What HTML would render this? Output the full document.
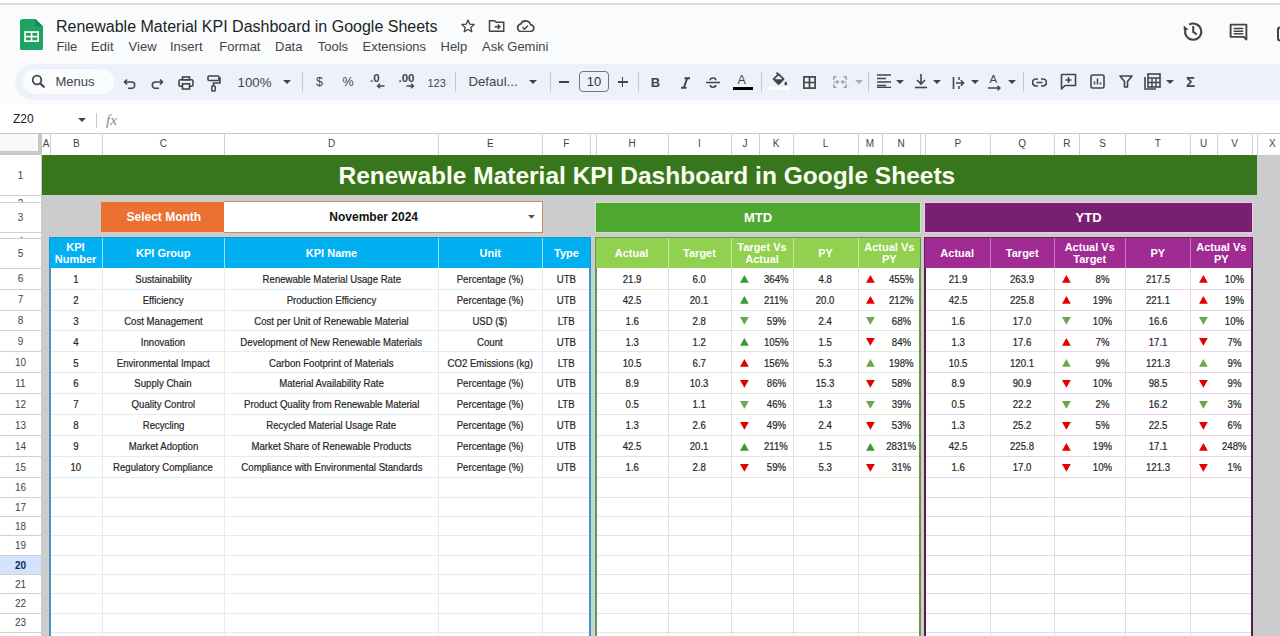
<!DOCTYPE html>
<html><head><meta charset="utf-8"><style>
*{margin:0;padding:0}
body{width:1280px;height:636px;overflow:hidden;position:relative;background:#f9fbfd;font-family:"Liberation Sans",sans-serif}
div,svg{position:absolute}
.t{white-space:nowrap}
.hd{display:flex;align-items:center;justify-content:center;text-align:center;color:#fff;font-weight:bold;font-size:11px;line-height:12px}
.dt{text-align:center;font-size:10.4px;color:#262626;-webkit-text-stroke:0.2px #262626}
.dt span{display:inline-block;transform:scaleX(.925);position:relative;top:1.6px}
.ch{height:22px;line-height:22px;text-align:center;font-size:10px;color:#444}
.rh{height:16px;line-height:16px;text-align:center;font-size:10px;color:#444}
.mi{font-size:13px;color:#444;top:38.6px;line-height:16px}
</style></head><body>
<div style="left:0;top:0;width:1280px;height:3px;background:#fff"></div>
<div style="left:0;top:2.8px;width:1280px;height:2px;background:#dadada"></div>
<svg style="left:19.8px;top:18.9px" width="23" height="31.5" viewBox="0 0 23 31.5">
<path d="M2.5 0 H15.5 L23 7.5 V29 Q23 31.5 20.5 31.5 H2.5 Q0 31.5 0 29 V2.5 Q0 0 2.5 0Z" fill="#1ea362"/>
<path d="M15.5 0 L23 7.5 H17.5 Q15.5 7.5 15.5 5.5Z" fill="#178a4f"/>
<rect x="4.2" y="12.2" width="14.8" height="10.8" fill="#fff"/>
<rect x="5.9" y="13.9" width="4.9" height="2.9" fill="#1ea362"/><rect x="12.4" y="13.9" width="4.9" height="2.9" fill="#1ea362"/>
<rect x="5.9" y="18.4" width="4.9" height="2.9" fill="#1ea362"/><rect x="12.4" y="18.4" width="4.9" height="2.9" fill="#1ea362"/>
</svg>
<div class="t" style="left:56px;top:17.5px;font-size:16px;line-height:18px;color:#1f1f1f">Renewable Material KPI Dashboard in Google Sheets</div>
<div class="t mi" style="left:56.4px">File</div>
<div class="t mi" style="left:91.1px">Edit</div>
<div class="t mi" style="left:128.6px">View</div>
<div class="t mi" style="left:170px">Insert</div>
<div class="t mi" style="left:219.3px">Format</div>
<div class="t mi" style="left:275px">Data</div>
<div class="t mi" style="left:317.7px">Tools</div>
<div class="t mi" style="left:362.5px">Extensions</div>
<div class="t mi" style="left:440.5px">Help</div>
<div class="t mi" style="left:482px">Ask Gemini</div>
<svg style="left:460px;top:18px" width="16" height="16" viewBox="0 0 24 24"><path d="M12 3l2.6 6.1 6.6.6-5 4.4 1.5 6.5L12 17.2 6.3 20.6l1.5-6.5-5-4.4 6.6-.6z" fill="none" stroke="#444" stroke-width="2" stroke-linejoin="round"/></svg>
<svg style="left:488px;top:18px" width="18" height="16" viewBox="0 0 24 20"><path d="M2 3h7l2 2h10v12H2z" fill="none" stroke="#444" stroke-width="2" stroke-linejoin="round"/><path d="M9 11h7M13 8l3 3-3 3" fill="none" stroke="#444" stroke-width="1.8"/></svg>
<svg style="left:516.3px;top:20px" width="18.4" height="12.3" viewBox="0 0 24 16"><path d="M6 15h12.5a4.5 4.5 0 0 0 .5-9A6.8 6.8 0 0 0 6.2 5.2 5 5 0 0 0 6 15z" fill="none" stroke="#444" stroke-width="2.2"/><path d="M8.5 9.5l2.5 2.5 4.5-4.5" fill="none" stroke="#444" stroke-width="2"/></svg>
<svg style="left:1180px;top:19px" width="28" height="26" viewBox="0 0 28 26"><path d="M9.15 5.74A8.1 8.1 0 1 1 5.38 10.65" fill="none" stroke="#444" stroke-width="2"/><polygon points="3.6,6.6 3.9,11.6 8.6,10.6" fill="#444"/><path d="M13.2 7V12.9L16.9 15.5" fill="none" stroke="#444" stroke-width="2"/></svg>
<svg style="left:1228px;top:22px" width="21" height="21" viewBox="0 0 24 24"><path d="M3 3h18v17l-3-3H3z" fill="none" stroke="#444" stroke-width="2.2" stroke-linejoin="round"/><path d="M6.5 7.5h11M6.5 10.5h11M6.5 13.5h11" stroke="#444" stroke-width="1.8"/></svg>
<svg style="left:1276.5px;top:26px" width="10" height="16" viewBox="0 0 10 16"><rect x="1" y="1.5" width="12" height="13" rx="2" fill="none" stroke="#444" stroke-width="2"/></svg>
<div style="left:15px;top:63.8px;width:1300px;height:36px;border-radius:18px;background:#edf2fa"></div>
<div style="left:22.5px;top:69.3px;width:91.3px;height:25px;border-radius:12.5px;background:#fbfcfe"></div>
<svg style="left:31px;top:74px" width="15" height="15" viewBox="0 0 15 15"><circle cx="6" cy="6" r="4.3" fill="none" stroke="#444" stroke-width="1.8"/><path d="M9.2 9.2l4.3 4.3" stroke="#444" stroke-width="2"/></svg>
<div class="t" style="left:55.5px;top:74px;font-size:13px;line-height:16px;color:#444">Menus</div>
<svg style="left:122.5px;top:75.5px" width="14" height="13" viewBox="0 0 14 13"><path d="M4 3.5L1.5 6 4 8.5" fill="none" stroke="#444" stroke-width="1.6"/><path d="M2 6h6.5a3.2 3.2 0 0 1 0 6.4H5" fill="none" stroke="#444" stroke-width="1.6"/></svg>
<svg style="left:149.7px;top:75.5px" width="14" height="13" viewBox="0 0 14 13"><path d="M10 3.5L12.5 6 10 8.5" fill="none" stroke="#444" stroke-width="1.6"/><path d="M12 6H5.5a3.2 3.2 0 0 0 0 6.4H9" fill="none" stroke="#444" stroke-width="1.6"/></svg>
<svg style="left:178px;top:75.5px" width="16" height="14" viewBox="0 0 16 14"><rect x="4.5" y="1" width="7" height="2.8" fill="none" stroke="#444" stroke-width="1.6"/><rect x="1" y="3.8" width="14" height="6.5" rx="1.5" fill="none" stroke="#444" stroke-width="1.6"/><rect x="4.5" y="7.8" width="7" height="5.2" fill="#edf2fa" stroke="#444" stroke-width="1.6"/></svg>
<svg style="left:207px;top:74.5px" width="14" height="17" viewBox="0 0 14 17"><rect x="1" y="1" width="11" height="4.5" rx="1" fill="none" stroke="#444" stroke-width="1.6"/><path d="M12 3h1v5H6.5v3" fill="none" stroke="#444" stroke-width="1.6"/><rect x="4.8" y="11" width="3.4" height="5" rx="0.8" fill="none" stroke="#444" stroke-width="1.5"/></svg>
<div class="t" style="left:237.5px;top:75px;font-size:13.3px;line-height:16px;color:#444">100%</div>
<svg style="left:282.5px;top:79.5px" width="8" height="4"><polygon points="0,0 8,0 4,4" fill="#444"/></svg>
<div style="left:302px;top:72px;width:1px;height:20px;background:#c7c7c7"></div>
<div class="t" style="left:316px;top:74px;font-size:12.5px;line-height:16px;color:#444">$</div>
<div class="t" style="left:342.5px;top:74px;font-size:12.5px;line-height:16px;color:#444">%</div>
<div class="t" style="left:370px;top:71px;font-size:11.5px;line-height:14px;color:#444;font-weight:bold">.0</div>
<svg style="left:376px;top:83px" width="9" height="6" viewBox="0 0 9 6"><path d="M8.5 3H1.5M4 .8L1.5 3 4 5.2" fill="none" stroke="#444" stroke-width="1.3"/></svg>
<div class="t" style="left:398.5px;top:71px;font-size:11.5px;line-height:14px;color:#444;font-weight:bold">.00</div>
<svg style="left:406px;top:83px" width="9" height="6" viewBox="0 0 9 6"><path d="M.5 3H7.5M5 .8L7.5 3 5 5.2" fill="none" stroke="#444" stroke-width="1.3"/></svg>
<div class="t" style="left:427.5px;top:75.5px;font-size:11px;line-height:14px;color:#444">123</div>
<div style="left:454.5px;top:72px;width:1px;height:20px;background:#c7c7c7"></div>
<div class="t" style="left:468.5px;top:74px;font-size:13.2px;line-height:16px;color:#444">Defaul...</div>
<svg style="left:528.5px;top:79.5px" width="8" height="4"><polygon points="0,0 8,0 4,4" fill="#444"/></svg>
<div style="left:550px;top:72px;width:1px;height:20px;background:#c7c7c7"></div>
<div style="left:558.5px;top:81.3px;width:10px;height:1.6px;background:#444"></div>
<div style="left:578.7px;top:71.2px;width:30.8px;height:21.3px;border:1px solid #747775;border-radius:4px;box-sizing:border-box"></div>
<div class="t" style="left:578.7px;top:74px;width:30.8px;text-align:center;font-size:13px;line-height:16px;color:#333">10</div>
<div style="left:617.5px;top:81.3px;width:10px;height:1.6px;background:#444"></div><div style="left:621.7px;top:77px;width:1.6px;height:10px;background:#444"></div>
<div style="left:638px;top:72px;width:1px;height:20px;background:#c7c7c7"></div>
<div class="t" style="left:650.8px;top:74.8px;font-size:13px;line-height:16px;color:#444;font-weight:bold">B</div>
<svg style="left:679.5px;top:76.5px" width="11" height="12" viewBox="0 0 11 12"><path d="M4.5 1.2h5.5M1 10.8h5.5M7.3 1.2L3.7 10.8" fill="none" stroke="#444" stroke-width="1.9"/></svg>
<svg style="left:706px;top:76.5px" width="14" height="11" viewBox="0 0 14 11"><path d="M0 5.5h14" stroke="#444" stroke-width="1.5"/><path d="M9.8 3.2a2.8 2.2 0 0 0-5.6 0M4.2 8a2.8 2.2 0 0 0 5.6 0" fill="none" stroke="#444" stroke-width="1.6"/></svg>
<div class="t" style="left:737.5px;top:73.3px;font-size:12.5px;line-height:14px;color:#444">A</div>
<div style="left:732.5px;top:87px;width:20.5px;height:3px;background:#000"></div>
<div style="left:761px;top:72px;width:1px;height:20px;background:#c7c7c7"></div>
<svg style="left:771.5px;top:72px" width="16" height="14" viewBox="0 0 16 14"><path d="M5 .8l1.6 1.6M3.2 3.8l6.2 0 0 0-3.6 6.2z" fill="none" stroke="#444" stroke-width="0"/><path d="M6.6 2.2l5 5-5 5-5-5z" fill="none" stroke="#444" stroke-width="1.7" stroke-linejoin="round"/><path d="M1.6 7.2h10l-5 5z" fill="#444"/><path d="M4.5 .6l2.3 2.3" stroke="#444" stroke-width="1.6"/><path d="M13.8 9.3c.9 1.3 1.4 2 1.4 2.6a1.4 1.4 0 0 1-2.8 0c0-.6.5-1.3 1.4-2.6z" fill="#444"/></svg>
<div style="left:768.5px;top:87px;width:21.5px;height:2.8px;background:#fff"></div>
<svg style="left:803.3px;top:75.7px" width="13" height="13" viewBox="0 0 13 13"><rect x=".9" y=".9" width="11.2" height="11.2" fill="none" stroke="#444" stroke-width="1.7"/><path d="M6.5 1v11M1 6.5h11" stroke="#444" stroke-width="1.7"/></svg>
<svg style="left:833px;top:76px" width="14" height="12" viewBox="0 0 14 12"><path d="M3.5 .8H.8V4M.8 8v3.2h2.7M.8 6h4.7M3.8 4.2L5.5 6 3.8 7.8M10.5 .8h2.7V4M13.2 8v3.2h-2.7M13.2 6H8.5M10.2 4.2L8.5 6l1.7 1.8" fill="none" stroke="#a8a8a8" stroke-width="1.5"/></svg>
<svg style="left:855px;top:79.5px" width="8" height="4"><polygon points="0,0 8,0 4,4" fill="#aaa"/></svg>
<div style="left:868px;top:72px;width:1px;height:20px;background:#c7c7c7"></div>
<svg style="left:877px;top:74px" width="14" height="14" viewBox="0 0 14 14"><path d="M0 1h14M0 4.5h9M0 8h14M0 11.5h9M0 13.5h14" stroke="#444" stroke-width="1.4"/></svg>
<svg style="left:895.5px;top:79.5px" width="8" height="4"><polygon points="0,0 8,0 4,4" fill="#444"/></svg>
<svg style="left:914px;top:73px" width="14" height="16" viewBox="0 0 14 16"><path d="M7 1v10M3 7l4 4 4-4" fill="none" stroke="#444" stroke-width="1.6"/><path d="M1 14.5h12" stroke="#444" stroke-width="1.6"/></svg>
<svg style="left:933px;top:79.5px" width="8" height="4"><polygon points="0,0 8,0 4,4" fill="#444"/></svg>
<svg style="left:951.5px;top:76.5px" width="13" height="12" viewBox="0 0 13 12"><path d="M1.5 0v12" stroke="#444" stroke-width="1.6"/><path d="M4 6h7.5M8.8 3.3L11.5 6 8.8 8.7" fill="none" stroke="#444" stroke-width="1.5"/><path d="M7 0v3M7 9v3" stroke="#444" stroke-width="1.5"/></svg>
<svg style="left:970.5px;top:79.5px" width="8" height="4"><polygon points="0,0 8,0 4,4" fill="#444"/></svg>
<div class="t" style="left:989.5px;top:73px;font-size:11.5px;line-height:13px;color:#444">A</div>
<svg style="left:988px;top:84.5px" width="13" height="6" viewBox="0 0 13 6"><path d="M0 3h12M9.5 .8L12 3 9.5 5.2" fill="none" stroke="#444" stroke-width="1.4"/></svg>
<svg style="left:1007.5px;top:79.5px" width="8" height="4"><polygon points="0,0 8,0 4,4" fill="#444"/></svg>
<div style="left:1022.5px;top:72px;width:1px;height:20px;background:#c7c7c7"></div>
<svg style="left:1032.3px;top:77.5px" width="15" height="9" viewBox="0 0 15 9"><path d="M6 1H4a3.5 3.5 0 0 0 0 7H6M9 1h2a3.5 3.5 0 0 1 0 7H9M4.5 4.5h6" fill="none" stroke="#444" stroke-width="1.7"/></svg>
<svg style="left:1060px;top:73px" width="17" height="17" viewBox="0 0 17 17"><path d="M1.5 1.5h14v11H5l-3.5 3.5z" fill="none" stroke="#444" stroke-width="1.6" stroke-linejoin="round"/><path d="M8.5 4v6M5.5 7h6" stroke="#444" stroke-width="1.6"/></svg>
<svg style="left:1090px;top:74px" width="15" height="15" viewBox="0 0 15 15"><rect x="1" y="1" width="13" height="13" rx="1.5" fill="none" stroke="#444" stroke-width="1.6"/><path d="M4.5 10.5v-3M7.5 10.5v-6M10.5 10.5v-2" stroke="#444" stroke-width="1.5"/></svg>
<svg style="left:1119px;top:75px" width="14" height="13" viewBox="0 0 14 13"><path d="M1 1h12L8.5 6.5V12h-3V6.5z" fill="none" stroke="#444" stroke-width="1.6" stroke-linejoin="round"/></svg>
<svg style="left:1144px;top:73px" width="17" height="17" viewBox="0 0 17 17"><path d="M1 4v12h11" fill="none" stroke="#444" stroke-width="1.6"/><rect x="4" y="1" width="12" height="13" fill="none" stroke="#444" stroke-width="1.6"/><path d="M4 5h12M8 5v9M12 5v9M4 9.5h12" stroke="#444" stroke-width="1.4"/></svg>
<svg style="left:1166px;top:79.5px" width="8" height="4"><polygon points="0,0 8,0 4,4" fill="#444"/></svg>
<div class="t" style="left:1186px;top:73px;font-size:15px;line-height:17px;color:#444;font-weight:bold">&Sigma;</div>
<div style="left:0;top:103.5px;width:1280px;height:29.5px;background:#fff"></div>
<div class="t" style="left:13px;top:112px;font-size:12px;line-height:14px;color:#222">Z20</div>
<svg style="left:77.5px;top:117.5px" width="8" height="4"><polygon points="0,0 8,0 4,4" fill="#444"/></svg>
<div style="left:96.3px;top:112.5px;width:1px;height:15px;background:#c7c7c7"></div>
<div class="t" style="left:106px;top:110.5px;font-size:15.5px;line-height:18px;color:#8a8f94;font-style:italic;font-family:&quot;Liberation Serif&quot;,serif">fx</div>
<div style="left:0;top:155px;width:1280px;height:481px;overflow:hidden">
<div style="left:0;top:-155px;width:1280px;height:636px">
<div class="" style="left:41px;top:155px;width:1239px;height:481px;background:#cccccc"></div>
<div class="" style="left:41.7px;top:154.7px;width:1215.8px;height:40.1px;background:#38761d"></div>
<div class="t" style="left:41.7px;top:155.7px;width:1210.3px;height:40px;line-height:40px;text-align:center;font-weight:bold;font-size:24.5px;color:#fbfff0">Renewable Material KPI Dashboard in Google Sheets</div>
<div class="" style="left:101px;top:201.6px;width:122.7px;height:30.9px;background:#ea7131"></div>
<div class="t" style="left:102.5px;top:202.4px;width:122.7px;height:31px;line-height:31px;text-align:center;font-weight:bold;font-size:12px;color:#fff">Select Month</div>
<div class="" style="left:223.7px;top:201.2px;width:318.9px;height:31.5px;background:#fff;border:1.6px solid #cc8a66;border-left:none;box-sizing:border-box"></div>
<div class="t" style="left:223.7px;top:202.4px;width:300px;height:31px;line-height:31px;text-align:center;font-weight:bold;font-size:12px;color:#111">November 2024</div>
<svg style="position:absolute;left:528.2px;top:215.2px" width="7" height="3.8"><polygon points="0,0 7,0 3.5,3.8" fill="#555"/></svg>
<div class="" style="left:596.3px;top:202.9px;width:323.4px;height:28.7px;background:#4ea72e;box-shadow:0 0 0 1px #c4e8b8"></div>
<div class="t" style="left:596.3px;top:202.9px;width:323.4px;height:29px;line-height:29px;text-align:center;font-weight:bold;font-size:13px;color:#fff">MTD</div>
<div class="" style="left:925.3px;top:203px;width:326.5px;height:28.7px;background:#781f71;box-shadow:0 0 0 1px #ecc8ec"></div>
<div class="t" style="left:925.3px;top:203px;width:326.5px;height:29px;line-height:29px;text-align:center;font-weight:bold;font-size:13px;color:#fff">YTD</div>
<div class="" style="left:49px;top:237.9px;width:542px;height:402.1px;background:#fff"></div>
<div class="" style="left:49px;top:237.9px;width:542px;height:30.1px;background:#00b0f0"></div>
<div class="" style="left:49px;top:288.63px;width:542px;height:1px;background:#dfeef3"></div>
<div class="" style="left:49px;top:309.56px;width:542px;height:1px;background:#dfeef3"></div>
<div class="" style="left:49px;top:330.49px;width:542px;height:1px;background:#dfeef3"></div>
<div class="" style="left:49px;top:351.42px;width:542px;height:1px;background:#dfeef3"></div>
<div class="" style="left:49px;top:372.35px;width:542px;height:1px;background:#dfeef3"></div>
<div class="" style="left:49px;top:393.28px;width:542px;height:1px;background:#dfeef3"></div>
<div class="" style="left:49px;top:414.21px;width:542px;height:1px;background:#dfeef3"></div>
<div class="" style="left:49px;top:435.14px;width:542px;height:1px;background:#dfeef3"></div>
<div class="" style="left:49px;top:456.07px;width:542px;height:1px;background:#dfeef3"></div>
<div class="" style="left:49px;top:477px;width:542px;height:1px;background:#dfeef3"></div>
<div class="" style="left:49px;top:497.1px;width:542px;height:1px;background:#dfeef3"></div>
<div class="" style="left:49px;top:516.3px;width:542px;height:1px;background:#dfeef3"></div>
<div class="" style="left:49px;top:535.3px;width:542px;height:1px;background:#dfeef3"></div>
<div class="" style="left:49px;top:554.7px;width:542px;height:1px;background:#dfeef3"></div>
<div class="" style="left:49px;top:574.1px;width:542px;height:1px;background:#dfeef3"></div>
<div class="" style="left:49px;top:593.2px;width:542px;height:1px;background:#dfeef3"></div>
<div class="" style="left:49px;top:612.6px;width:542px;height:1px;background:#dfeef3"></div>
<div class="" style="left:49px;top:631.8px;width:542px;height:1px;background:#dfeef3"></div>
<div class="" style="left:49px;top:651px;width:542px;height:1px;background:#dfeef3"></div>
<div class="" style="left:101.5px;top:268px;width:1px;height:372px;background:#dfeef3"></div>
<div class="" style="left:101.5px;top:237.9px;width:1px;height:30.1px;background:#9fdcf5"></div>
<div class="" style="left:224px;top:268px;width:1px;height:372px;background:#dfeef3"></div>
<div class="" style="left:224px;top:237.9px;width:1px;height:30.1px;background:#9fdcf5"></div>
<div class="" style="left:438px;top:268px;width:1px;height:372px;background:#dfeef3"></div>
<div class="" style="left:438px;top:237.9px;width:1px;height:30.1px;background:#9fdcf5"></div>
<div class="" style="left:541.5px;top:268px;width:1px;height:372px;background:#dfeef3"></div>
<div class="" style="left:541.5px;top:237.9px;width:1px;height:30.1px;background:#9fdcf5"></div>
<div class="" style="left:49px;top:268px;width:542px;height:372px;border:2px solid #4e93b8;box-sizing:border-box;border-bottom:none;border-top:none"></div>
<div class="" style="left:49px;top:237.3px;width:542px;height:1.2px;background:#1996cc"></div>
<div class="" style="left:49px;top:237.9px;width:1px;height:30.1px;background:#1996cc"></div>
<div class="" style="left:590px;top:237.9px;width:1px;height:30.1px;background:#1996cc"></div>
<div class="t hd" style="left:49px;top:237.9px;width:53px;height:30px">KPI<br>Number</div>
<div class="t hd" style="left:102px;top:237.9px;width:122.5px;height:30px">KPI Group</div>
<div class="t hd" style="left:224.5px;top:237.9px;width:214px;height:30px">KPI Name</div>
<div class="t hd" style="left:438.5px;top:237.9px;width:103.5px;height:30px">Unit</div>
<div class="t hd" style="left:542px;top:237.9px;width:49px;height:30px">Type</div>
<div class="" style="left:595px;top:237.9px;width:325.6px;height:402.1px;background:#fff"></div>
<div class="" style="left:595px;top:237.9px;width:325.6px;height:30.1px;background:#92d050"></div>
<div class="" style="left:595px;top:288.63px;width:325.6px;height:1px;background:#dde9d6"></div>
<div class="" style="left:595px;top:309.56px;width:325.6px;height:1px;background:#dde9d6"></div>
<div class="" style="left:595px;top:330.49px;width:325.6px;height:1px;background:#dde9d6"></div>
<div class="" style="left:595px;top:351.42px;width:325.6px;height:1px;background:#dde9d6"></div>
<div class="" style="left:595px;top:372.35px;width:325.6px;height:1px;background:#dde9d6"></div>
<div class="" style="left:595px;top:393.28px;width:325.6px;height:1px;background:#dde9d6"></div>
<div class="" style="left:595px;top:414.21px;width:325.6px;height:1px;background:#dde9d6"></div>
<div class="" style="left:595px;top:435.14px;width:325.6px;height:1px;background:#dde9d6"></div>
<div class="" style="left:595px;top:456.07px;width:325.6px;height:1px;background:#dde9d6"></div>
<div class="" style="left:595px;top:477px;width:325.6px;height:1px;background:#dde9d6"></div>
<div class="" style="left:595px;top:497.1px;width:325.6px;height:1px;background:#dde9d6"></div>
<div class="" style="left:595px;top:516.3px;width:325.6px;height:1px;background:#dde9d6"></div>
<div class="" style="left:595px;top:535.3px;width:325.6px;height:1px;background:#dde9d6"></div>
<div class="" style="left:595px;top:554.7px;width:325.6px;height:1px;background:#dde9d6"></div>
<div class="" style="left:595px;top:574.1px;width:325.6px;height:1px;background:#dde9d6"></div>
<div class="" style="left:595px;top:593.2px;width:325.6px;height:1px;background:#dde9d6"></div>
<div class="" style="left:595px;top:612.6px;width:325.6px;height:1px;background:#dde9d6"></div>
<div class="" style="left:595px;top:631.8px;width:325.6px;height:1px;background:#dde9d6"></div>
<div class="" style="left:595px;top:651px;width:325.6px;height:1px;background:#dde9d6"></div>
<div class="" style="left:667.5px;top:268px;width:1px;height:372px;background:#dde9d6"></div>
<div class="" style="left:667.5px;top:237.9px;width:1px;height:30.1px;background:#c4e6a3"></div>
<div class="" style="left:730.5px;top:268px;width:1px;height:372px;background:#dde9d6"></div>
<div class="" style="left:730.5px;top:237.9px;width:1px;height:30.1px;background:#c4e6a3"></div>
<div class="" style="left:792.5px;top:268px;width:1px;height:372px;background:#dde9d6"></div>
<div class="" style="left:792.5px;top:237.9px;width:1px;height:30.1px;background:#c4e6a3"></div>
<div class="" style="left:857.5px;top:268px;width:1px;height:372px;background:#dde9d6"></div>
<div class="" style="left:857.5px;top:237.9px;width:1px;height:30.1px;background:#c4e6a3"></div>
<div class="" style="left:595px;top:268px;width:325.6px;height:372px;border:2px solid #6b9356;box-sizing:border-box;border-bottom:none;border-top:none"></div>
<div class="" style="left:595px;top:237.3px;width:325.6px;height:1.2px;background:#5f9a48"></div>
<div class="" style="left:595px;top:237.9px;width:1px;height:30.1px;background:#5f9a48"></div>
<div class="" style="left:919.6px;top:237.9px;width:1px;height:30.1px;background:#5f9a48"></div>
<div class="t hd" style="left:595px;top:237.9px;width:73px;height:30px">Actual</div>
<div class="t hd" style="left:668px;top:237.9px;width:63px;height:30px">Target</div>
<div class="t hd" style="left:731px;top:237.9px;width:62px;height:30px">Target Vs<br>Actual</div>
<div class="t hd" style="left:793px;top:237.9px;width:65px;height:30px">PY</div>
<div class="t hd" style="left:858px;top:237.9px;width:62.6px;height:30px">Actual Vs<br>PY</div>
<div class="" style="left:923.8px;top:237.9px;width:328.8px;height:402.1px;background:#fff"></div>
<div class="" style="left:923.8px;top:237.9px;width:328.8px;height:30.1px;background:#a02b93"></div>
<div class="" style="left:923.8px;top:288.63px;width:328.8px;height:1px;background:#ead6ec"></div>
<div class="" style="left:923.8px;top:309.56px;width:328.8px;height:1px;background:#ead6ec"></div>
<div class="" style="left:923.8px;top:330.49px;width:328.8px;height:1px;background:#ead6ec"></div>
<div class="" style="left:923.8px;top:351.42px;width:328.8px;height:1px;background:#ead6ec"></div>
<div class="" style="left:923.8px;top:372.35px;width:328.8px;height:1px;background:#ead6ec"></div>
<div class="" style="left:923.8px;top:393.28px;width:328.8px;height:1px;background:#ead6ec"></div>
<div class="" style="left:923.8px;top:414.21px;width:328.8px;height:1px;background:#ead6ec"></div>
<div class="" style="left:923.8px;top:435.14px;width:328.8px;height:1px;background:#ead6ec"></div>
<div class="" style="left:923.8px;top:456.07px;width:328.8px;height:1px;background:#ead6ec"></div>
<div class="" style="left:923.8px;top:477px;width:328.8px;height:1px;background:#ead6ec"></div>
<div class="" style="left:923.8px;top:497.1px;width:328.8px;height:1px;background:#ead6ec"></div>
<div class="" style="left:923.8px;top:516.3px;width:328.8px;height:1px;background:#ead6ec"></div>
<div class="" style="left:923.8px;top:535.3px;width:328.8px;height:1px;background:#ead6ec"></div>
<div class="" style="left:923.8px;top:554.7px;width:328.8px;height:1px;background:#ead6ec"></div>
<div class="" style="left:923.8px;top:574.1px;width:328.8px;height:1px;background:#ead6ec"></div>
<div class="" style="left:923.8px;top:593.2px;width:328.8px;height:1px;background:#ead6ec"></div>
<div class="" style="left:923.8px;top:612.6px;width:328.8px;height:1px;background:#ead6ec"></div>
<div class="" style="left:923.8px;top:631.8px;width:328.8px;height:1px;background:#ead6ec"></div>
<div class="" style="left:923.8px;top:651px;width:328.8px;height:1px;background:#ead6ec"></div>
<div class="" style="left:990px;top:268px;width:1px;height:372px;background:#ead6ec"></div>
<div class="" style="left:990px;top:237.9px;width:1px;height:30.1px;background:#c97bbf"></div>
<div class="" style="left:1053.5px;top:268px;width:1px;height:372px;background:#ead6ec"></div>
<div class="" style="left:1053.5px;top:237.9px;width:1px;height:30.1px;background:#c97bbf"></div>
<div class="" style="left:1125px;top:268px;width:1px;height:372px;background:#ead6ec"></div>
<div class="" style="left:1125px;top:237.9px;width:1px;height:30.1px;background:#c97bbf"></div>
<div class="" style="left:1189.5px;top:268px;width:1px;height:372px;background:#ead6ec"></div>
<div class="" style="left:1189.5px;top:237.9px;width:1px;height:30.1px;background:#c97bbf"></div>
<div class="" style="left:923.8px;top:268px;width:328.8px;height:372px;border:2px solid #561d4b;box-sizing:border-box;border-bottom:none;border-top:none"></div>
<div class="" style="left:923.8px;top:237.3px;width:328.8px;height:1.2px;background:#6a1d5f"></div>
<div class="" style="left:923.8px;top:237.9px;width:1px;height:30.1px;background:#6a1d5f"></div>
<div class="" style="left:1251.6px;top:237.9px;width:1px;height:30.1px;background:#6a1d5f"></div>
<div class="t hd" style="left:923.8px;top:237.9px;width:66.7px;height:30px">Actual</div>
<div class="t hd" style="left:990.5px;top:237.9px;width:63.5px;height:30px">Target</div>
<div class="t hd" style="left:1054px;top:237.9px;width:71.5px;height:30px">Actual Vs<br>Target</div>
<div class="t hd" style="left:1125.5px;top:237.9px;width:64.5px;height:30px">PY</div>
<div class="t hd" style="left:1190px;top:237.9px;width:62.6px;height:30px">Actual Vs<br>PY</div>
<div class="" style="left:591px;top:268px;width:4px;height:372px;background:linear-gradient(to right,#b3d9e8,#c9d8c2)"></div>
<div class="" style="left:920.6px;top:268px;width:3.2px;height:372px;background:linear-gradient(to right,#bcd9b5,#e3c6d6)"></div>
<div class="t dt" style="left:50px;top:268.2px;width:52px;height:20.93px;line-height:20.93px"><span>1</span></div>
<div class="t dt" style="left:102px;top:268.2px;width:122.5px;height:20.93px;line-height:20.93px"><span>Sustainability</span></div>
<div class="t dt" style="left:224.5px;top:268.2px;width:214px;height:20.93px;line-height:20.93px"><span>Renewable Material Usage Rate</span></div>
<div class="t dt" style="left:438.5px;top:268.2px;width:103.5px;height:20.93px;line-height:20.93px"><span>Percentage (%)</span></div>
<div class="t dt" style="left:542px;top:268.2px;width:48px;height:20.93px;line-height:20.93px"><span>UTB</span></div>
<div class="t dt" style="left:596px;top:268.2px;width:72px;height:20.93px;line-height:20.93px"><span>21.9</span></div>
<div class="t dt" style="left:668px;top:268.2px;width:63px;height:20.93px;line-height:20.93px"><span>6.0</span></div>
<svg style="position:absolute;left:740.2px;top:275.37px" width="8.8" height="7.8"><polygon points="4.4,0 8.8,7.8 0,7.8" fill="#3a9a3a"/></svg>
<div class="t dt" style="left:759px;top:268.2px;width:34px;height:20.93px;line-height:20.93px"><span>364%</span></div>
<div class="t dt" style="left:793px;top:268.2px;width:65px;height:20.93px;line-height:20.93px"><span>4.8</span></div>
<svg style="position:absolute;left:866.1px;top:275.37px" width="8.8" height="7.8"><polygon points="4.4,0 8.8,7.8 0,7.8" fill="#e50000"/></svg>
<div class="t dt" style="left:882px;top:268.2px;width:38px;height:20.93px;line-height:20.93px"><span>455%</span></div>
<div class="t dt" style="left:925px;top:268.2px;width:65.5px;height:20.93px;line-height:20.93px"><span>21.9</span></div>
<div class="t dt" style="left:990.5px;top:268.2px;width:63.5px;height:20.93px;line-height:20.93px"><span>263.9</span></div>
<svg style="position:absolute;left:1062.3px;top:275.37px" width="8.8" height="7.8"><polygon points="4.4,0 8.8,7.8 0,7.8" fill="#e50000"/></svg>
<div class="t dt" style="left:1079.5px;top:268.2px;width:46px;height:20.93px;line-height:20.93px"><span>8%</span></div>
<div class="t dt" style="left:1125.5px;top:268.2px;width:64.5px;height:20.93px;line-height:20.93px"><span>217.5</span></div>
<svg style="position:absolute;left:1198.9px;top:275.37px" width="8.8" height="7.8"><polygon points="4.4,0 8.8,7.8 0,7.8" fill="#e50000"/></svg>
<div class="t dt" style="left:1217px;top:268.2px;width:35px;height:20.93px;line-height:20.93px"><span>10%</span></div>
<div class="t dt" style="left:50px;top:289.13px;width:52px;height:20.93px;line-height:20.93px"><span>2</span></div>
<div class="t dt" style="left:102px;top:289.13px;width:122.5px;height:20.93px;line-height:20.93px"><span>Efficiency</span></div>
<div class="t dt" style="left:224.5px;top:289.13px;width:214px;height:20.93px;line-height:20.93px"><span>Production Efficiency</span></div>
<div class="t dt" style="left:438.5px;top:289.13px;width:103.5px;height:20.93px;line-height:20.93px"><span>Percentage (%)</span></div>
<div class="t dt" style="left:542px;top:289.13px;width:48px;height:20.93px;line-height:20.93px"><span>UTB</span></div>
<div class="t dt" style="left:596px;top:289.13px;width:72px;height:20.93px;line-height:20.93px"><span>42.5</span></div>
<div class="t dt" style="left:668px;top:289.13px;width:63px;height:20.93px;line-height:20.93px"><span>20.1</span></div>
<svg style="position:absolute;left:740.2px;top:296.3px" width="8.8" height="7.8"><polygon points="4.4,0 8.8,7.8 0,7.8" fill="#3a9a3a"/></svg>
<div class="t dt" style="left:759px;top:289.13px;width:34px;height:20.93px;line-height:20.93px"><span>211%</span></div>
<div class="t dt" style="left:793px;top:289.13px;width:65px;height:20.93px;line-height:20.93px"><span>20.0</span></div>
<svg style="position:absolute;left:866.1px;top:296.3px" width="8.8" height="7.8"><polygon points="4.4,0 8.8,7.8 0,7.8" fill="#e50000"/></svg>
<div class="t dt" style="left:882px;top:289.13px;width:38px;height:20.93px;line-height:20.93px"><span>212%</span></div>
<div class="t dt" style="left:925px;top:289.13px;width:65.5px;height:20.93px;line-height:20.93px"><span>42.5</span></div>
<div class="t dt" style="left:990.5px;top:289.13px;width:63.5px;height:20.93px;line-height:20.93px"><span>225.8</span></div>
<svg style="position:absolute;left:1062.3px;top:296.3px" width="8.8" height="7.8"><polygon points="4.4,0 8.8,7.8 0,7.8" fill="#e50000"/></svg>
<div class="t dt" style="left:1079.5px;top:289.13px;width:46px;height:20.93px;line-height:20.93px"><span>19%</span></div>
<div class="t dt" style="left:1125.5px;top:289.13px;width:64.5px;height:20.93px;line-height:20.93px"><span>221.1</span></div>
<svg style="position:absolute;left:1198.9px;top:296.3px" width="8.8" height="7.8"><polygon points="4.4,0 8.8,7.8 0,7.8" fill="#e50000"/></svg>
<div class="t dt" style="left:1217px;top:289.13px;width:35px;height:20.93px;line-height:20.93px"><span>19%</span></div>
<div class="t dt" style="left:50px;top:310.06px;width:52px;height:20.93px;line-height:20.93px"><span>3</span></div>
<div class="t dt" style="left:102px;top:310.06px;width:122.5px;height:20.93px;line-height:20.93px"><span>Cost Management</span></div>
<div class="t dt" style="left:224.5px;top:310.06px;width:214px;height:20.93px;line-height:20.93px"><span>Cost per Unit of Renewable Material</span></div>
<div class="t dt" style="left:438.5px;top:310.06px;width:103.5px;height:20.93px;line-height:20.93px"><span>USD ($)</span></div>
<div class="t dt" style="left:542px;top:310.06px;width:48px;height:20.93px;line-height:20.93px"><span>LTB</span></div>
<div class="t dt" style="left:596px;top:310.06px;width:72px;height:20.93px;line-height:20.93px"><span>1.6</span></div>
<div class="t dt" style="left:668px;top:310.06px;width:63px;height:20.93px;line-height:20.93px"><span>2.8</span></div>
<svg style="position:absolute;left:740.2px;top:317.23px" width="8.8" height="7.8"><polygon points="0,0 8.8,0 4.4,7.8" fill="#6aa84f"/></svg>
<div class="t dt" style="left:759px;top:310.06px;width:34px;height:20.93px;line-height:20.93px"><span>59%</span></div>
<div class="t dt" style="left:793px;top:310.06px;width:65px;height:20.93px;line-height:20.93px"><span>2.4</span></div>
<svg style="position:absolute;left:866.1px;top:317.23px" width="8.8" height="7.8"><polygon points="0,0 8.8,0 4.4,7.8" fill="#6aa84f"/></svg>
<div class="t dt" style="left:882px;top:310.06px;width:38px;height:20.93px;line-height:20.93px"><span>68%</span></div>
<div class="t dt" style="left:925px;top:310.06px;width:65.5px;height:20.93px;line-height:20.93px"><span>1.6</span></div>
<div class="t dt" style="left:990.5px;top:310.06px;width:63.5px;height:20.93px;line-height:20.93px"><span>17.0</span></div>
<svg style="position:absolute;left:1062.3px;top:317.23px" width="8.8" height="7.8"><polygon points="0,0 8.8,0 4.4,7.8" fill="#6aa84f"/></svg>
<div class="t dt" style="left:1079.5px;top:310.06px;width:46px;height:20.93px;line-height:20.93px"><span>10%</span></div>
<div class="t dt" style="left:1125.5px;top:310.06px;width:64.5px;height:20.93px;line-height:20.93px"><span>16.6</span></div>
<svg style="position:absolute;left:1198.9px;top:317.23px" width="8.8" height="7.8"><polygon points="0,0 8.8,0 4.4,7.8" fill="#6aa84f"/></svg>
<div class="t dt" style="left:1217px;top:310.06px;width:35px;height:20.93px;line-height:20.93px"><span>10%</span></div>
<div class="t dt" style="left:50px;top:330.99px;width:52px;height:20.93px;line-height:20.93px"><span>4</span></div>
<div class="t dt" style="left:102px;top:330.99px;width:122.5px;height:20.93px;line-height:20.93px"><span>Innovation</span></div>
<div class="t dt" style="left:224.5px;top:330.99px;width:214px;height:20.93px;line-height:20.93px"><span>Development of New Renewable Materials</span></div>
<div class="t dt" style="left:438.5px;top:330.99px;width:103.5px;height:20.93px;line-height:20.93px"><span>Count</span></div>
<div class="t dt" style="left:542px;top:330.99px;width:48px;height:20.93px;line-height:20.93px"><span>UTB</span></div>
<div class="t dt" style="left:596px;top:330.99px;width:72px;height:20.93px;line-height:20.93px"><span>1.3</span></div>
<div class="t dt" style="left:668px;top:330.99px;width:63px;height:20.93px;line-height:20.93px"><span>1.2</span></div>
<svg style="position:absolute;left:740.2px;top:338.16px" width="8.8" height="7.8"><polygon points="4.4,0 8.8,7.8 0,7.8" fill="#3a9a3a"/></svg>
<div class="t dt" style="left:759px;top:330.99px;width:34px;height:20.93px;line-height:20.93px"><span>105%</span></div>
<div class="t dt" style="left:793px;top:330.99px;width:65px;height:20.93px;line-height:20.93px"><span>1.5</span></div>
<svg style="position:absolute;left:866.1px;top:338.16px" width="8.8" height="7.8"><polygon points="0,0 8.8,0 4.4,7.8" fill="#e50000"/></svg>
<div class="t dt" style="left:882px;top:330.99px;width:38px;height:20.93px;line-height:20.93px"><span>84%</span></div>
<div class="t dt" style="left:925px;top:330.99px;width:65.5px;height:20.93px;line-height:20.93px"><span>1.3</span></div>
<div class="t dt" style="left:990.5px;top:330.99px;width:63.5px;height:20.93px;line-height:20.93px"><span>17.6</span></div>
<svg style="position:absolute;left:1062.3px;top:338.16px" width="8.8" height="7.8"><polygon points="4.4,0 8.8,7.8 0,7.8" fill="#e50000"/></svg>
<div class="t dt" style="left:1079.5px;top:330.99px;width:46px;height:20.93px;line-height:20.93px"><span>7%</span></div>
<div class="t dt" style="left:1125.5px;top:330.99px;width:64.5px;height:20.93px;line-height:20.93px"><span>17.1</span></div>
<svg style="position:absolute;left:1198.9px;top:338.16px" width="8.8" height="7.8"><polygon points="0,0 8.8,0 4.4,7.8" fill="#e50000"/></svg>
<div class="t dt" style="left:1217px;top:330.99px;width:35px;height:20.93px;line-height:20.93px"><span>7%</span></div>
<div class="t dt" style="left:50px;top:351.92px;width:52px;height:20.93px;line-height:20.93px"><span>5</span></div>
<div class="t dt" style="left:102px;top:351.92px;width:122.5px;height:20.93px;line-height:20.93px"><span>Environmental Impact</span></div>
<div class="t dt" style="left:224.5px;top:351.92px;width:214px;height:20.93px;line-height:20.93px"><span>Carbon Footprint of Materials</span></div>
<div class="t dt" style="left:438.5px;top:351.92px;width:103.5px;height:20.93px;line-height:20.93px"><span>CO2 Emissions (kg)</span></div>
<div class="t dt" style="left:542px;top:351.92px;width:48px;height:20.93px;line-height:20.93px"><span>LTB</span></div>
<div class="t dt" style="left:596px;top:351.92px;width:72px;height:20.93px;line-height:20.93px"><span>10.5</span></div>
<div class="t dt" style="left:668px;top:351.92px;width:63px;height:20.93px;line-height:20.93px"><span>6.7</span></div>
<svg style="position:absolute;left:740.2px;top:359.09px" width="8.8" height="7.8"><polygon points="4.4,0 8.8,7.8 0,7.8" fill="#e50000"/></svg>
<div class="t dt" style="left:759px;top:351.92px;width:34px;height:20.93px;line-height:20.93px"><span>156%</span></div>
<div class="t dt" style="left:793px;top:351.92px;width:65px;height:20.93px;line-height:20.93px"><span>5.3</span></div>
<svg style="position:absolute;left:866.1px;top:359.09px" width="8.8" height="7.8"><polygon points="4.4,0 8.8,7.8 0,7.8" fill="#6aa84f"/></svg>
<div class="t dt" style="left:882px;top:351.92px;width:38px;height:20.93px;line-height:20.93px"><span>198%</span></div>
<div class="t dt" style="left:925px;top:351.92px;width:65.5px;height:20.93px;line-height:20.93px"><span>10.5</span></div>
<div class="t dt" style="left:990.5px;top:351.92px;width:63.5px;height:20.93px;line-height:20.93px"><span>120.1</span></div>
<svg style="position:absolute;left:1062.3px;top:359.09px" width="8.8" height="7.8"><polygon points="4.4,0 8.8,7.8 0,7.8" fill="#6aa84f"/></svg>
<div class="t dt" style="left:1079.5px;top:351.92px;width:46px;height:20.93px;line-height:20.93px"><span>9%</span></div>
<div class="t dt" style="left:1125.5px;top:351.92px;width:64.5px;height:20.93px;line-height:20.93px"><span>121.3</span></div>
<svg style="position:absolute;left:1198.9px;top:359.09px" width="8.8" height="7.8"><polygon points="4.4,0 8.8,7.8 0,7.8" fill="#6aa84f"/></svg>
<div class="t dt" style="left:1217px;top:351.92px;width:35px;height:20.93px;line-height:20.93px"><span>9%</span></div>
<div class="t dt" style="left:50px;top:372.85px;width:52px;height:20.93px;line-height:20.93px"><span>6</span></div>
<div class="t dt" style="left:102px;top:372.85px;width:122.5px;height:20.93px;line-height:20.93px"><span>Supply Chain</span></div>
<div class="t dt" style="left:224.5px;top:372.85px;width:214px;height:20.93px;line-height:20.93px"><span>Material Availability Rate</span></div>
<div class="t dt" style="left:438.5px;top:372.85px;width:103.5px;height:20.93px;line-height:20.93px"><span>Percentage (%)</span></div>
<div class="t dt" style="left:542px;top:372.85px;width:48px;height:20.93px;line-height:20.93px"><span>UTB</span></div>
<div class="t dt" style="left:596px;top:372.85px;width:72px;height:20.93px;line-height:20.93px"><span>8.9</span></div>
<div class="t dt" style="left:668px;top:372.85px;width:63px;height:20.93px;line-height:20.93px"><span>10.3</span></div>
<svg style="position:absolute;left:740.2px;top:380.02px" width="8.8" height="7.8"><polygon points="0,0 8.8,0 4.4,7.8" fill="#e50000"/></svg>
<div class="t dt" style="left:759px;top:372.85px;width:34px;height:20.93px;line-height:20.93px"><span>86%</span></div>
<div class="t dt" style="left:793px;top:372.85px;width:65px;height:20.93px;line-height:20.93px"><span>15.3</span></div>
<svg style="position:absolute;left:866.1px;top:380.02px" width="8.8" height="7.8"><polygon points="0,0 8.8,0 4.4,7.8" fill="#e50000"/></svg>
<div class="t dt" style="left:882px;top:372.85px;width:38px;height:20.93px;line-height:20.93px"><span>58%</span></div>
<div class="t dt" style="left:925px;top:372.85px;width:65.5px;height:20.93px;line-height:20.93px"><span>8.9</span></div>
<div class="t dt" style="left:990.5px;top:372.85px;width:63.5px;height:20.93px;line-height:20.93px"><span>90.9</span></div>
<svg style="position:absolute;left:1062.3px;top:380.02px" width="8.8" height="7.8"><polygon points="0,0 8.8,0 4.4,7.8" fill="#e50000"/></svg>
<div class="t dt" style="left:1079.5px;top:372.85px;width:46px;height:20.93px;line-height:20.93px"><span>10%</span></div>
<div class="t dt" style="left:1125.5px;top:372.85px;width:64.5px;height:20.93px;line-height:20.93px"><span>98.5</span></div>
<svg style="position:absolute;left:1198.9px;top:380.02px" width="8.8" height="7.8"><polygon points="0,0 8.8,0 4.4,7.8" fill="#e50000"/></svg>
<div class="t dt" style="left:1217px;top:372.85px;width:35px;height:20.93px;line-height:20.93px"><span>9%</span></div>
<div class="t dt" style="left:50px;top:393.78px;width:52px;height:20.93px;line-height:20.93px"><span>7</span></div>
<div class="t dt" style="left:102px;top:393.78px;width:122.5px;height:20.93px;line-height:20.93px"><span>Quality Control</span></div>
<div class="t dt" style="left:224.5px;top:393.78px;width:214px;height:20.93px;line-height:20.93px"><span>Product Quality from Renewable Material</span></div>
<div class="t dt" style="left:438.5px;top:393.78px;width:103.5px;height:20.93px;line-height:20.93px"><span>Percentage (%)</span></div>
<div class="t dt" style="left:542px;top:393.78px;width:48px;height:20.93px;line-height:20.93px"><span>LTB</span></div>
<div class="t dt" style="left:596px;top:393.78px;width:72px;height:20.93px;line-height:20.93px"><span>0.5</span></div>
<div class="t dt" style="left:668px;top:393.78px;width:63px;height:20.93px;line-height:20.93px"><span>1.1</span></div>
<svg style="position:absolute;left:740.2px;top:400.95px" width="8.8" height="7.8"><polygon points="0,0 8.8,0 4.4,7.8" fill="#6aa84f"/></svg>
<div class="t dt" style="left:759px;top:393.78px;width:34px;height:20.93px;line-height:20.93px"><span>46%</span></div>
<div class="t dt" style="left:793px;top:393.78px;width:65px;height:20.93px;line-height:20.93px"><span>1.3</span></div>
<svg style="position:absolute;left:866.1px;top:400.95px" width="8.8" height="7.8"><polygon points="0,0 8.8,0 4.4,7.8" fill="#6aa84f"/></svg>
<div class="t dt" style="left:882px;top:393.78px;width:38px;height:20.93px;line-height:20.93px"><span>39%</span></div>
<div class="t dt" style="left:925px;top:393.78px;width:65.5px;height:20.93px;line-height:20.93px"><span>0.5</span></div>
<div class="t dt" style="left:990.5px;top:393.78px;width:63.5px;height:20.93px;line-height:20.93px"><span>22.2</span></div>
<svg style="position:absolute;left:1062.3px;top:400.95px" width="8.8" height="7.8"><polygon points="0,0 8.8,0 4.4,7.8" fill="#6aa84f"/></svg>
<div class="t dt" style="left:1079.5px;top:393.78px;width:46px;height:20.93px;line-height:20.93px"><span>2%</span></div>
<div class="t dt" style="left:1125.5px;top:393.78px;width:64.5px;height:20.93px;line-height:20.93px"><span>16.2</span></div>
<svg style="position:absolute;left:1198.9px;top:400.95px" width="8.8" height="7.8"><polygon points="0,0 8.8,0 4.4,7.8" fill="#6aa84f"/></svg>
<div class="t dt" style="left:1217px;top:393.78px;width:35px;height:20.93px;line-height:20.93px"><span>3%</span></div>
<div class="t dt" style="left:50px;top:414.71px;width:52px;height:20.93px;line-height:20.93px"><span>8</span></div>
<div class="t dt" style="left:102px;top:414.71px;width:122.5px;height:20.93px;line-height:20.93px"><span>Recycling</span></div>
<div class="t dt" style="left:224.5px;top:414.71px;width:214px;height:20.93px;line-height:20.93px"><span>Recycled Material Usage Rate</span></div>
<div class="t dt" style="left:438.5px;top:414.71px;width:103.5px;height:20.93px;line-height:20.93px"><span>Percentage (%)</span></div>
<div class="t dt" style="left:542px;top:414.71px;width:48px;height:20.93px;line-height:20.93px"><span>UTB</span></div>
<div class="t dt" style="left:596px;top:414.71px;width:72px;height:20.93px;line-height:20.93px"><span>1.3</span></div>
<div class="t dt" style="left:668px;top:414.71px;width:63px;height:20.93px;line-height:20.93px"><span>2.6</span></div>
<svg style="position:absolute;left:740.2px;top:421.88px" width="8.8" height="7.8"><polygon points="0,0 8.8,0 4.4,7.8" fill="#e50000"/></svg>
<div class="t dt" style="left:759px;top:414.71px;width:34px;height:20.93px;line-height:20.93px"><span>49%</span></div>
<div class="t dt" style="left:793px;top:414.71px;width:65px;height:20.93px;line-height:20.93px"><span>2.4</span></div>
<svg style="position:absolute;left:866.1px;top:421.88px" width="8.8" height="7.8"><polygon points="0,0 8.8,0 4.4,7.8" fill="#e50000"/></svg>
<div class="t dt" style="left:882px;top:414.71px;width:38px;height:20.93px;line-height:20.93px"><span>53%</span></div>
<div class="t dt" style="left:925px;top:414.71px;width:65.5px;height:20.93px;line-height:20.93px"><span>1.3</span></div>
<div class="t dt" style="left:990.5px;top:414.71px;width:63.5px;height:20.93px;line-height:20.93px"><span>25.2</span></div>
<svg style="position:absolute;left:1062.3px;top:421.88px" width="8.8" height="7.8"><polygon points="0,0 8.8,0 4.4,7.8" fill="#e50000"/></svg>
<div class="t dt" style="left:1079.5px;top:414.71px;width:46px;height:20.93px;line-height:20.93px"><span>5%</span></div>
<div class="t dt" style="left:1125.5px;top:414.71px;width:64.5px;height:20.93px;line-height:20.93px"><span>22.5</span></div>
<svg style="position:absolute;left:1198.9px;top:421.88px" width="8.8" height="7.8"><polygon points="0,0 8.8,0 4.4,7.8" fill="#e50000"/></svg>
<div class="t dt" style="left:1217px;top:414.71px;width:35px;height:20.93px;line-height:20.93px"><span>6%</span></div>
<div class="t dt" style="left:50px;top:435.64px;width:52px;height:20.93px;line-height:20.93px"><span>9</span></div>
<div class="t dt" style="left:102px;top:435.64px;width:122.5px;height:20.93px;line-height:20.93px"><span>Market Adoption</span></div>
<div class="t dt" style="left:224.5px;top:435.64px;width:214px;height:20.93px;line-height:20.93px"><span>Market Share of Renewable Products</span></div>
<div class="t dt" style="left:438.5px;top:435.64px;width:103.5px;height:20.93px;line-height:20.93px"><span>Percentage (%)</span></div>
<div class="t dt" style="left:542px;top:435.64px;width:48px;height:20.93px;line-height:20.93px"><span>UTB</span></div>
<div class="t dt" style="left:596px;top:435.64px;width:72px;height:20.93px;line-height:20.93px"><span>42.5</span></div>
<div class="t dt" style="left:668px;top:435.64px;width:63px;height:20.93px;line-height:20.93px"><span>20.1</span></div>
<svg style="position:absolute;left:740.2px;top:442.81px" width="8.8" height="7.8"><polygon points="4.4,0 8.8,7.8 0,7.8" fill="#3a9a3a"/></svg>
<div class="t dt" style="left:759px;top:435.64px;width:34px;height:20.93px;line-height:20.93px"><span>211%</span></div>
<div class="t dt" style="left:793px;top:435.64px;width:65px;height:20.93px;line-height:20.93px"><span>1.5</span></div>
<svg style="position:absolute;left:866.1px;top:442.81px" width="8.8" height="7.8"><polygon points="4.4,0 8.8,7.8 0,7.8" fill="#3a9a3a"/></svg>
<div class="t dt" style="left:882px;top:435.64px;width:38px;height:20.93px;line-height:20.93px"><span>2831%</span></div>
<div class="t dt" style="left:925px;top:435.64px;width:65.5px;height:20.93px;line-height:20.93px"><span>42.5</span></div>
<div class="t dt" style="left:990.5px;top:435.64px;width:63.5px;height:20.93px;line-height:20.93px"><span>225.8</span></div>
<svg style="position:absolute;left:1062.3px;top:442.81px" width="8.8" height="7.8"><polygon points="4.4,0 8.8,7.8 0,7.8" fill="#e50000"/></svg>
<div class="t dt" style="left:1079.5px;top:435.64px;width:46px;height:20.93px;line-height:20.93px"><span>19%</span></div>
<div class="t dt" style="left:1125.5px;top:435.64px;width:64.5px;height:20.93px;line-height:20.93px"><span>17.1</span></div>
<svg style="position:absolute;left:1198.9px;top:442.81px" width="8.8" height="7.8"><polygon points="4.4,0 8.8,7.8 0,7.8" fill="#e50000"/></svg>
<div class="t dt" style="left:1217px;top:435.64px;width:35px;height:20.93px;line-height:20.93px"><span>248%</span></div>
<div class="t dt" style="left:50px;top:456.57px;width:52px;height:20.93px;line-height:20.93px"><span>10</span></div>
<div class="t dt" style="left:102px;top:456.57px;width:122.5px;height:20.93px;line-height:20.93px"><span>Regulatory Compliance</span></div>
<div class="t dt" style="left:224.5px;top:456.57px;width:214px;height:20.93px;line-height:20.93px"><span>Compliance with Environmental Standards</span></div>
<div class="t dt" style="left:438.5px;top:456.57px;width:103.5px;height:20.93px;line-height:20.93px"><span>Percentage (%)</span></div>
<div class="t dt" style="left:542px;top:456.57px;width:48px;height:20.93px;line-height:20.93px"><span>UTB</span></div>
<div class="t dt" style="left:596px;top:456.57px;width:72px;height:20.93px;line-height:20.93px"><span>1.6</span></div>
<div class="t dt" style="left:668px;top:456.57px;width:63px;height:20.93px;line-height:20.93px"><span>2.8</span></div>
<svg style="position:absolute;left:740.2px;top:463.74px" width="8.8" height="7.8"><polygon points="0,0 8.8,0 4.4,7.8" fill="#e50000"/></svg>
<div class="t dt" style="left:759px;top:456.57px;width:34px;height:20.93px;line-height:20.93px"><span>59%</span></div>
<div class="t dt" style="left:793px;top:456.57px;width:65px;height:20.93px;line-height:20.93px"><span>5.3</span></div>
<svg style="position:absolute;left:866.1px;top:463.74px" width="8.8" height="7.8"><polygon points="0,0 8.8,0 4.4,7.8" fill="#e50000"/></svg>
<div class="t dt" style="left:882px;top:456.57px;width:38px;height:20.93px;line-height:20.93px"><span>31%</span></div>
<div class="t dt" style="left:925px;top:456.57px;width:65.5px;height:20.93px;line-height:20.93px"><span>1.6</span></div>
<div class="t dt" style="left:990.5px;top:456.57px;width:63.5px;height:20.93px;line-height:20.93px"><span>17.0</span></div>
<svg style="position:absolute;left:1062.3px;top:463.74px" width="8.8" height="7.8"><polygon points="0,0 8.8,0 4.4,7.8" fill="#e50000"/></svg>
<div class="t dt" style="left:1079.5px;top:456.57px;width:46px;height:20.93px;line-height:20.93px"><span>10%</span></div>
<div class="t dt" style="left:1125.5px;top:456.57px;width:64.5px;height:20.93px;line-height:20.93px"><span>121.3</span></div>
<svg style="position:absolute;left:1198.9px;top:463.74px" width="8.8" height="7.8"><polygon points="0,0 8.8,0 4.4,7.8" fill="#e50000"/></svg>
<div class="t dt" style="left:1217px;top:456.57px;width:35px;height:20.93px;line-height:20.93px"><span>1%</span></div>
</div></div>
<div style="position:absolute;left:0;top:133px;width:1280px;height:22px;background:#fff"></div>
<div style="position:absolute;left:0;top:133px;width:38.5px;height:18px;background:#f8f9fa"></div>
<div style="position:absolute;left:38.2px;top:133px;width:3.5px;height:22px;background:#c8c8c8"></div>
<div style="position:absolute;left:0;top:151px;width:41.7px;height:3.7px;background:#c8c8c8"></div>
<div style="position:absolute;left:0;top:132.6px;width:1280px;height:1px;background:#c7c7c7"></div>
<div class="t ch" style="left:41.5px;top:133px;width:9px">A</div>
<div style="position:absolute;left:50px;top:133px;width:1px;height:22px;background:#d0d0d0"></div>
<div class="t ch" style="left:50.5px;top:133px;width:51.5px">B</div>
<div style="position:absolute;left:101.5px;top:133px;width:1px;height:22px;background:#d0d0d0"></div>
<div class="t ch" style="left:102px;top:133px;width:122.5px">C</div>
<div style="position:absolute;left:224px;top:133px;width:1px;height:22px;background:#d0d0d0"></div>
<div class="t ch" style="left:224.5px;top:133px;width:214px">D</div>
<div style="position:absolute;left:438px;top:133px;width:1px;height:22px;background:#d0d0d0"></div>
<div class="t ch" style="left:438.5px;top:133px;width:103.5px">E</div>
<div style="position:absolute;left:541.5px;top:133px;width:1px;height:22px;background:#d0d0d0"></div>
<div class="t ch" style="left:542px;top:133px;width:48.5px">F</div>
<div style="position:absolute;left:590px;top:133px;width:1px;height:22px;background:#d0d0d0"></div>
<div style="position:absolute;left:595.5px;top:133px;width:1px;height:22px;background:#d0d0d0"></div>
<div class="t ch" style="left:596px;top:133px;width:72px">H</div>
<div style="position:absolute;left:667.5px;top:133px;width:1px;height:22px;background:#d0d0d0"></div>
<div class="t ch" style="left:668px;top:133px;width:63px">I</div>
<div style="position:absolute;left:730.5px;top:133px;width:1px;height:22px;background:#d0d0d0"></div>
<div class="t ch" style="left:731px;top:133px;width:28px">J</div>
<div style="position:absolute;left:758.5px;top:133px;width:1px;height:22px;background:#d0d0d0"></div>
<div class="t ch" style="left:759px;top:133px;width:34px">K</div>
<div style="position:absolute;left:792.5px;top:133px;width:1px;height:22px;background:#d0d0d0"></div>
<div class="t ch" style="left:793px;top:133px;width:65px">L</div>
<div style="position:absolute;left:857.5px;top:133px;width:1px;height:22px;background:#d0d0d0"></div>
<div class="t ch" style="left:858px;top:133px;width:24px">M</div>
<div style="position:absolute;left:881.5px;top:133px;width:1px;height:22px;background:#d0d0d0"></div>
<div class="t ch" style="left:882px;top:133px;width:38px">N</div>
<div style="position:absolute;left:919.5px;top:133px;width:1px;height:22px;background:#d0d0d0"></div>
<div style="position:absolute;left:924.5px;top:133px;width:1px;height:22px;background:#d0d0d0"></div>
<div class="t ch" style="left:925px;top:133px;width:65.5px">P</div>
<div style="position:absolute;left:990px;top:133px;width:1px;height:22px;background:#d0d0d0"></div>
<div class="t ch" style="left:990.5px;top:133px;width:63.5px">Q</div>
<div style="position:absolute;left:1053.5px;top:133px;width:1px;height:22px;background:#d0d0d0"></div>
<div class="t ch" style="left:1054px;top:133px;width:25.5px">R</div>
<div style="position:absolute;left:1079px;top:133px;width:1px;height:22px;background:#d0d0d0"></div>
<div class="t ch" style="left:1079.5px;top:133px;width:46px">S</div>
<div style="position:absolute;left:1125px;top:133px;width:1px;height:22px;background:#d0d0d0"></div>
<div class="t ch" style="left:1125.5px;top:133px;width:64.5px">T</div>
<div style="position:absolute;left:1189.5px;top:133px;width:1px;height:22px;background:#d0d0d0"></div>
<div class="t ch" style="left:1190px;top:133px;width:27px">U</div>
<div style="position:absolute;left:1216.5px;top:133px;width:1px;height:22px;background:#d0d0d0"></div>
<div class="t ch" style="left:1217px;top:133px;width:35px">V</div>
<div style="position:absolute;left:1251.5px;top:133px;width:1px;height:22px;background:#d0d0d0"></div>
<div style="position:absolute;left:1257px;top:133px;width:1px;height:22px;background:#d0d0d0"></div>
<div class="t ch" style="left:1257.5px;top:133px;width:29.5px">X</div>
<div style="position:absolute;left:1286.5px;top:133px;width:1px;height:22px;background:#d0d0d0"></div>
<div style="left:0;top:155px;width:41px;height:40.2px;background:#fff;overflow:hidden"><div class="t rh" style="left:0;top:12.8px;width:41px;">1</div></div>
<div style="left:0;top:195.2px;width:41px;height:7.1px;background:#fff;overflow:hidden"><div class="t rh" style="left:0;top:1px;width:41px;">2</div></div>
<div style="left:0;top:202.3px;width:41px;height:30.2px;background:#fff;overflow:hidden"><div class="t rh" style="left:0;top:7.8px;width:41px;">3</div></div>
<div style="left:0;top:232.5px;width:41px;height:5.5px;background:#fff;overflow:hidden"><div class="t rh" style="left:0;top:1px;width:41px;">4</div></div>
<div style="left:0;top:238px;width:41px;height:30.2px;background:#fff;overflow:hidden"><div class="t rh" style="left:0;top:7.8px;width:41px;">5</div></div>
<div style="left:0;top:268.2px;width:41px;height:20.93px;background:#fff;overflow:hidden"><div class="t rh" style="left:0;top:3.17px;width:41px;">6</div></div>
<div style="left:0;top:289.13px;width:41px;height:20.93px;background:#fff;overflow:hidden"><div class="t rh" style="left:0;top:3.17px;width:41px;">7</div></div>
<div style="left:0;top:310.06px;width:41px;height:20.93px;background:#fff;overflow:hidden"><div class="t rh" style="left:0;top:3.17px;width:41px;">8</div></div>
<div style="left:0;top:330.99px;width:41px;height:20.93px;background:#fff;overflow:hidden"><div class="t rh" style="left:0;top:3.16px;width:41px;">9</div></div>
<div style="left:0;top:351.92px;width:41px;height:20.93px;background:#fff;overflow:hidden"><div class="t rh" style="left:0;top:3.17px;width:41px;">10</div></div>
<div style="left:0;top:372.85px;width:41px;height:20.93px;background:#fff;overflow:hidden"><div class="t rh" style="left:0;top:3.16px;width:41px;">11</div></div>
<div style="left:0;top:393.78px;width:41px;height:20.93px;background:#fff;overflow:hidden"><div class="t rh" style="left:0;top:3.17px;width:41px;">12</div></div>
<div style="left:0;top:414.71px;width:41px;height:20.93px;background:#fff;overflow:hidden"><div class="t rh" style="left:0;top:3.17px;width:41px;">13</div></div>
<div style="left:0;top:435.64px;width:41px;height:20.93px;background:#fff;overflow:hidden"><div class="t rh" style="left:0;top:3.17px;width:41px;">14</div></div>
<div style="left:0;top:456.57px;width:41px;height:20.93px;background:#fff;overflow:hidden"><div class="t rh" style="left:0;top:3.17px;width:41px;">15</div></div>
<div style="left:0;top:477.5px;width:41px;height:20.1px;background:#fff;overflow:hidden"><div class="t rh" style="left:0;top:2.75px;width:41px;">16</div></div>
<div style="left:0;top:497.6px;width:41px;height:19.2px;background:#fff;overflow:hidden"><div class="t rh" style="left:0;top:2.3px;width:41px;">17</div></div>
<div style="left:0;top:516.8px;width:41px;height:19px;background:#fff;overflow:hidden"><div class="t rh" style="left:0;top:2.2px;width:41px;">18</div></div>
<div style="left:0;top:535.8px;width:41px;height:19.4px;background:#fff;overflow:hidden"><div class="t rh" style="left:0;top:2.4px;width:41px;">19</div></div>
<div style="left:0;top:555.2px;width:41px;height:19.4px;background:#d3e3fd;overflow:hidden"><div class="t rh" style="left:0;top:2.4px;width:41px;color:#0b2a5b;font-weight:bold">20</div></div>
<div style="left:0;top:574.6px;width:41px;height:19.1px;background:#fff;overflow:hidden"><div class="t rh" style="left:0;top:2.25px;width:41px;">21</div></div>
<div style="left:0;top:593.7px;width:41px;height:19.4px;background:#fff;overflow:hidden"><div class="t rh" style="left:0;top:2.4px;width:41px;">22</div></div>
<div style="left:0;top:613.1px;width:41px;height:19.2px;background:#fff;overflow:hidden"><div class="t rh" style="left:0;top:2.3px;width:41px;">23</div></div>
<div style="left:0;top:632.3px;width:41px;height:19.2px;background:#fff;overflow:hidden"><div class="t rh" style="left:0;top:2.3px;width:41px;">24</div></div>
<div style="left:0;top:194.7px;width:41px;height:1px;background:#d0d0d0"></div>
<div style="left:0;top:201.8px;width:41px;height:1px;background:#d0d0d0"></div>
<div style="left:0;top:232px;width:41px;height:1px;background:#d0d0d0"></div>
<div style="left:0;top:237.5px;width:41px;height:1px;background:#d0d0d0"></div>
<div style="left:0;top:267.7px;width:41px;height:1px;background:#d0d0d0"></div>
<div style="left:0;top:288.63px;width:41px;height:1px;background:#d0d0d0"></div>
<div style="left:0;top:309.56px;width:41px;height:1px;background:#d0d0d0"></div>
<div style="left:0;top:330.49px;width:41px;height:1px;background:#d0d0d0"></div>
<div style="left:0;top:351.42px;width:41px;height:1px;background:#d0d0d0"></div>
<div style="left:0;top:372.35px;width:41px;height:1px;background:#d0d0d0"></div>
<div style="left:0;top:393.28px;width:41px;height:1px;background:#d0d0d0"></div>
<div style="left:0;top:414.21px;width:41px;height:1px;background:#d0d0d0"></div>
<div style="left:0;top:435.14px;width:41px;height:1px;background:#d0d0d0"></div>
<div style="left:0;top:456.07px;width:41px;height:1px;background:#d0d0d0"></div>
<div style="left:0;top:477px;width:41px;height:1px;background:#d0d0d0"></div>
<div style="left:0;top:497.1px;width:41px;height:1px;background:#d0d0d0"></div>
<div style="left:0;top:516.3px;width:41px;height:1px;background:#d0d0d0"></div>
<div style="left:0;top:535.3px;width:41px;height:1px;background:#d0d0d0"></div>
<div style="left:0;top:554.7px;width:41px;height:1px;background:#d0d0d0"></div>
<div style="left:0;top:574.1px;width:41px;height:1px;background:#d0d0d0"></div>
<div style="left:0;top:593.2px;width:41px;height:1px;background:#d0d0d0"></div>
<div style="left:0;top:612.6px;width:41px;height:1px;background:#d0d0d0"></div>
<div style="left:0;top:631.8px;width:41px;height:1px;background:#d0d0d0"></div>
<div style="left:0;top:651px;width:41px;height:1px;background:#d0d0d0"></div>
</body></html>
